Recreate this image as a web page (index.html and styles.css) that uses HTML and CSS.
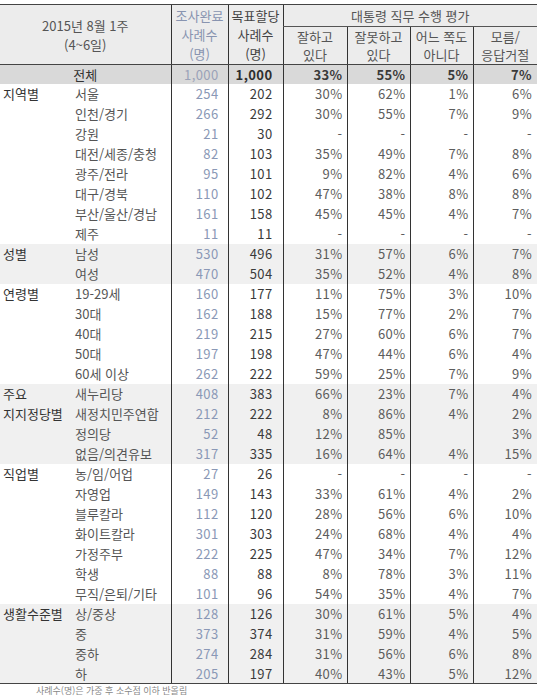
FILE: index.html
```html
<!DOCTYPE html>
<html lang="ko">
<head>
<meta charset="utf-8">
<link rel="stylesheet" href="styles.css">
</head>
<body>
<div class="page">
<table class="poll">
  <colgroup>
    <col class="c-grp"><col class="c-sub"><col class="c-n1"><col class="c-n2">
    <col class="c-p1"><col class="c-p2"><col class="c-p3"><col class="c-p4">
  </colgroup>
  <thead>
    <tr class="h1">
      <th class="title" colspan="2" rowspan="2">2015년 8월 1주<br>(4~6일)</th>
      <th class="nh done" rowspan="2">조사완료<br>사례수<br>(명)</th>
      <th class="nh target" rowspan="2">목표할당<br>사례수<br>(명)</th>
      <th class="grouph" colspan="4">대통령 직무 수행 평가</th>
    </tr>
    <tr class="h2">
      <th class="sh">잘하고<br>있다</th>
      <th class="sh">잘못하고<br>있다</th>
      <th class="sh">어느 쪽도<br>아니다</th>
      <th class="sh">모름/<br>응답거절</th>
    </tr>
  </thead>
  <tbody>
    <tr class="total">
      <td class="tlabel" colspan="2">전체</td>
      <td class="n done">1,000</td><td class="n target">1,000</td>
      <td class="n p">33%</td><td class="n p">55%</td><td class="n p">5%</td><td class="n p">7%</td>
    </tr>

    <tr><td class="g">지역별</td><td class="s">서울</td><td class="n done">254</td><td class="n target">202</td><td class="n p">30%</td><td class="n p">62%</td><td class="n p">1%</td><td class="n p">6%</td></tr>
    <tr><td class="g"></td><td class="s">인천/경기</td><td class="n done">266</td><td class="n target">292</td><td class="n p">30%</td><td class="n p">55%</td><td class="n p">7%</td><td class="n p">9%</td></tr>
    <tr><td class="g"></td><td class="s">강원</td><td class="n done">21</td><td class="n target">30</td><td class="n p">-</td><td class="n p">-</td><td class="n p">-</td><td class="n p">-</td></tr>
    <tr><td class="g"></td><td class="s">대전/세종/충청</td><td class="n done">82</td><td class="n target">103</td><td class="n p">35%</td><td class="n p">49%</td><td class="n p">7%</td><td class="n p">8%</td></tr>
    <tr><td class="g"></td><td class="s">광주/전라</td><td class="n done">95</td><td class="n target">101</td><td class="n p">9%</td><td class="n p">82%</td><td class="n p">4%</td><td class="n p">6%</td></tr>
    <tr><td class="g"></td><td class="s">대구/경북</td><td class="n done">110</td><td class="n target">102</td><td class="n p">47%</td><td class="n p">38%</td><td class="n p">8%</td><td class="n p">8%</td></tr>
    <tr><td class="g"></td><td class="s">부산/울산/경남</td><td class="n done">161</td><td class="n target">158</td><td class="n p">45%</td><td class="n p">45%</td><td class="n p">4%</td><td class="n p">7%</td></tr>
    <tr><td class="g"></td><td class="s">제주</td><td class="n done">11</td><td class="n target">11</td><td class="n p">-</td><td class="n p">-</td><td class="n p">-</td><td class="n p">-</td></tr>

    <tr class="band"><td class="g">성별</td><td class="s">남성</td><td class="n done">530</td><td class="n target">496</td><td class="n p">31%</td><td class="n p">57%</td><td class="n p">6%</td><td class="n p">7%</td></tr>
    <tr class="band"><td class="g"></td><td class="s">여성</td><td class="n done">470</td><td class="n target">504</td><td class="n p">35%</td><td class="n p">52%</td><td class="n p">4%</td><td class="n p">8%</td></tr>

    <tr><td class="g">연령별</td><td class="s">19-29세</td><td class="n done">160</td><td class="n target">177</td><td class="n p">11%</td><td class="n p">75%</td><td class="n p">3%</td><td class="n p">10%</td></tr>
    <tr><td class="g"></td><td class="s">30대</td><td class="n done">162</td><td class="n target">188</td><td class="n p">15%</td><td class="n p">77%</td><td class="n p">2%</td><td class="n p">7%</td></tr>
    <tr><td class="g"></td><td class="s">40대</td><td class="n done">219</td><td class="n target">215</td><td class="n p">27%</td><td class="n p">60%</td><td class="n p">6%</td><td class="n p">7%</td></tr>
    <tr><td class="g"></td><td class="s">50대</td><td class="n done">197</td><td class="n target">198</td><td class="n p">47%</td><td class="n p">44%</td><td class="n p">6%</td><td class="n p">4%</td></tr>
    <tr><td class="g"></td><td class="s">60세 이상</td><td class="n done">262</td><td class="n target">222</td><td class="n p">59%</td><td class="n p">25%</td><td class="n p">7%</td><td class="n p">9%</td></tr>

    <tr class="band"><td class="g">주요</td><td class="s">새누리당</td><td class="n done">408</td><td class="n target">383</td><td class="n p">66%</td><td class="n p">23%</td><td class="n p">7%</td><td class="n p">4%</td></tr>
    <tr class="band"><td class="g">지지정당별</td><td class="s">새정치민주연합</td><td class="n done">212</td><td class="n target">222</td><td class="n p">8%</td><td class="n p">86%</td><td class="n p">4%</td><td class="n p">2%</td></tr>
    <tr class="band"><td class="g"></td><td class="s">정의당</td><td class="n done">52</td><td class="n target">48</td><td class="n p">12%</td><td class="n p">85%</td><td class="n p"></td><td class="n p">3%</td></tr>
    <tr class="band"><td class="g"></td><td class="s">없음/의견유보</td><td class="n done">317</td><td class="n target">335</td><td class="n p">16%</td><td class="n p">64%</td><td class="n p">4%</td><td class="n p">15%</td></tr>

    <tr><td class="g">직업별</td><td class="s">농/임/어업</td><td class="n done">27</td><td class="n target">26</td><td class="n p">-</td><td class="n p">-</td><td class="n p">-</td><td class="n p">-</td></tr>
    <tr><td class="g"></td><td class="s">자영업</td><td class="n done">149</td><td class="n target">143</td><td class="n p">33%</td><td class="n p">61%</td><td class="n p">4%</td><td class="n p">2%</td></tr>
    <tr><td class="g"></td><td class="s">블루칼라</td><td class="n done">112</td><td class="n target">120</td><td class="n p">28%</td><td class="n p">56%</td><td class="n p">6%</td><td class="n p">10%</td></tr>
    <tr><td class="g"></td><td class="s">화이트칼라</td><td class="n done">301</td><td class="n target">303</td><td class="n p">24%</td><td class="n p">68%</td><td class="n p">4%</td><td class="n p">4%</td></tr>
    <tr><td class="g"></td><td class="s">가정주부</td><td class="n done">222</td><td class="n target">225</td><td class="n p">47%</td><td class="n p">34%</td><td class="n p">7%</td><td class="n p">12%</td></tr>
    <tr><td class="g"></td><td class="s">학생</td><td class="n done">88</td><td class="n target">88</td><td class="n p">8%</td><td class="n p">78%</td><td class="n p">3%</td><td class="n p">11%</td></tr>
    <tr><td class="g"></td><td class="s">무직/은퇴/기타</td><td class="n done">101</td><td class="n target">96</td><td class="n p">54%</td><td class="n p">35%</td><td class="n p">4%</td><td class="n p">7%</td></tr>

    <tr class="band"><td class="g">생활수준별</td><td class="s">상/중상</td><td class="n done">128</td><td class="n target">126</td><td class="n p">30%</td><td class="n p">61%</td><td class="n p">5%</td><td class="n p">4%</td></tr>
    <tr class="band"><td class="g"></td><td class="s">중</td><td class="n done">373</td><td class="n target">374</td><td class="n p">31%</td><td class="n p">59%</td><td class="n p">4%</td><td class="n p">5%</td></tr>
    <tr class="band"><td class="g"></td><td class="s">중하</td><td class="n done">274</td><td class="n target">284</td><td class="n p">31%</td><td class="n p">56%</td><td class="n p">6%</td><td class="n p">8%</td></tr>
    <tr class="band last"><td class="g"></td><td class="s">하</td><td class="n done">205</td><td class="n target">197</td><td class="n p">40%</td><td class="n p">43%</td><td class="n p">5%</td><td class="n p">12%</td></tr>
  </tbody>
</table>
<p class="note">사례수(명)은 가중 후 소수점 이하 반올림</p>
</div>
</body>
</html>
```

FILE: styles.css
```css
html, body {
  margin: 0;
  padding: 0;
  background: #ffffff;
}

body {
  font-family: "Noto Sans CJK KR", "Noto Sans", sans-serif;
  font-size: 13px;
  color: #555;
  overflow: hidden;
}

.page {
  padding-top: 4px;
}

.poll {
  border-collapse: collapse;
  table-layout: fixed;
  width: 537px;
}

.c-grp { width: 72px; }
.c-sub { width: 99px; }
.c-n1 { width: 57px; }
.c-n2 { width: 55px; }
.c-p1 { width: 64px; }
.c-p2 { width: 63px; }
.c-p3 { width: 63px; }
.c-p4 { width: 64px; }

.poll th,
.poll td {
  padding: 0;
  font-weight: normal;
  white-space: nowrap;
  overflow: visible;
}

/* header */
.poll thead th {
  background: #ececec;
  color: #555;
  text-align: center;
  line-height: 19px;
}

.h1 th {
  border-top: 1.5px solid #444;
}

.h1 { height: 22px; }
.h2 { height: 38px; }

.poll thead tr.h2 th,
.poll thead th.title,
.poll thead th.nh {
  border-bottom: 1.5px solid #444;
}

.title {
  padding-top: 1px;
}

.nh {
  border-left: 1px solid #333;
  vertical-align: middle;
}

.nh.done {
  color: #8894b0;
}

.nh.target {
  color: #444;
}

.grouph {
  border-left: 1px solid #333;
  border-bottom: 1px solid #555;
  vertical-align: middle;
  line-height: 20px;
}

.sh {
  border-left: 1px solid #333;
  line-height: 18px !important;
  vertical-align: middle;
}

/* body */
.poll tbody tr {
  height: 20px;
}

.poll td {
  line-height: 17px;
  vertical-align: middle;
}

.n {
  text-align: right;
  border-left: 1px solid #333;
  letter-spacing: 0.4px;
}

.n.done {
  color: #8a98b6;
  padding-right: 9px;
}

.n.target {
  color: #3a3a3a;
  padding-right: 10px;
}

.n.p {
  color: #5c5c5c;
  padding-right: 4px;
}

.poll td:last-child {
  padding-right: 5px;
}

.g {
  font-weight: bold;
  color: #333;
  padding-left: 3px !important;
}

.s {
  color: #555;
  padding-left: 3px !important;
}

.poll tbody tr.total {
  background: #d9d9d9;
  height: 19px;
}

.tlabel {
  text-align: center;
  font-weight: bold;
  color: #333;
}

.total .n.done {
  color: #9aa2b8;
}

.total .n.target {
  color: #2e2e2e;
  font-weight: bold;
}

.total .n.p {
  color: #3a3a3a;
  font-weight: bold;
}

.band {
  background: #f0f0f0;
}

.last td {
  border-bottom: 1.5px solid #444;
}

.note {
  margin: 2px 0 0 36px;
  font-size: 9px;
  line-height: 10px;
  color: #888;
}
```
